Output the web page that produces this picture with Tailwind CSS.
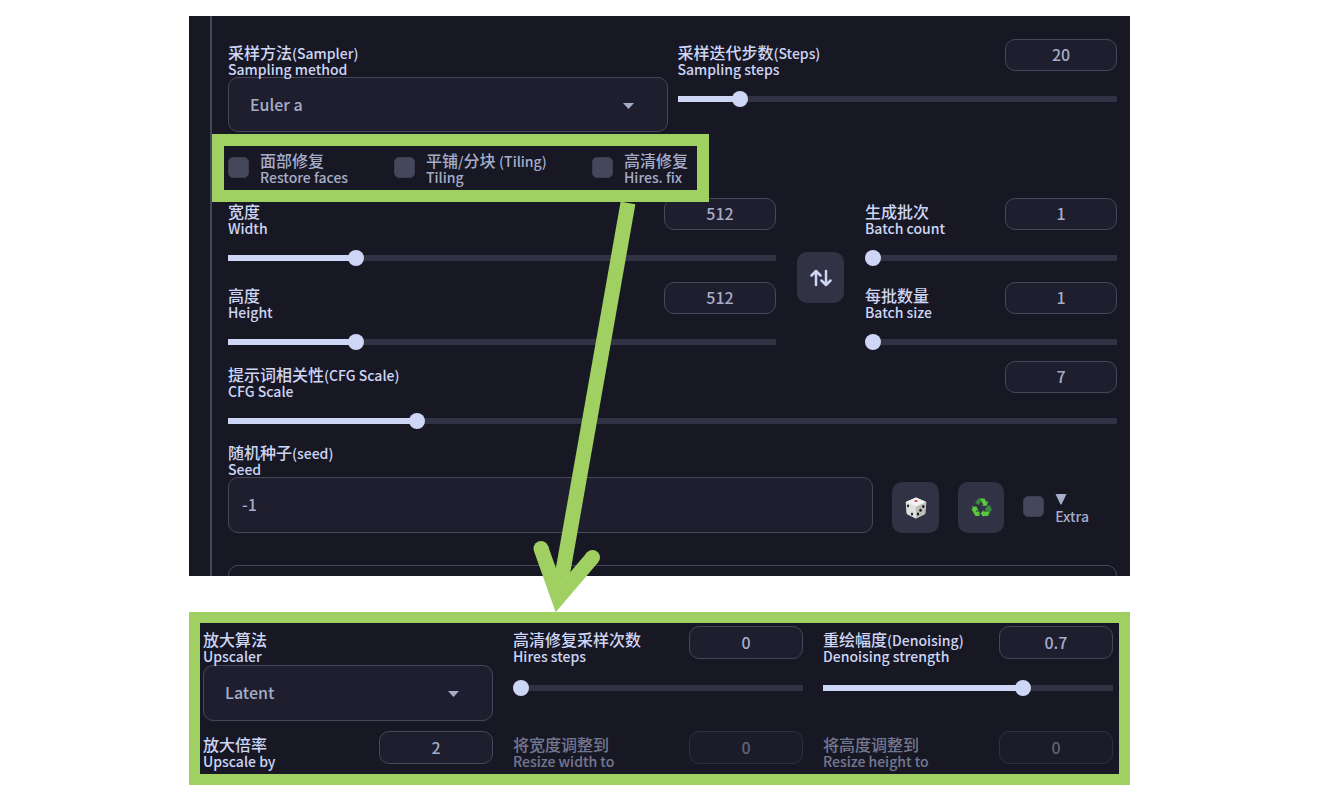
<!DOCTYPE html>
<html lang="zh-CN">
<head>
<meta charset="utf-8">
<title>Stable Diffusion Hires. fix</title>
<script src="https://cdn.jsdelivr.net/npm/@tailwindcss/browser@4"></script>
</head>
<body class="bg-white pt-4 pb-4 pl-[189px] pr-[198px] font-['Noto_Sans_CJK_SC',sans-serif] text-base/4 font-medium text-[#cdd6f4] [&_small]:text-sm/3 [&_input[type=range]]:block [&_input[type=range]]:h-[6px] [&_input[type=range]]:w-full [&_input[type=range]]:appearance-none [&_input[type=range]]:bg-[#313244] [&_input::-webkit-slider-thumb]:size-4 [&_input::-webkit-slider-thumb]:appearance-none [&_input::-webkit-slider-thumb]:rounded-full [&_input::-webkit-slider-thumb]:bg-[#cdd6f4] [&_input[type=text]]:rounded-[10px] [&_input[type=text]]:border [&_input[type=text]]:border-[#45475a] [&_input[type=text]]:bg-[#1e1e2e] [&_input[type=text]]:pb-[2px] [&_input[type=text]]:text-base [&_input[type=text]]:text-[#a6adc8] [&_input[type=checkbox]]:size-[21px] [&_input[type=checkbox]]:shrink-0 [&_input[type=checkbox]]:appearance-none [&_input[type=checkbox]]:rounded-[5px] [&_input[type=checkbox]]:border [&_input[type=checkbox]]:border-[#3c3d50] [&_input[type=checkbox]]:bg-[#45475a] [&_select]:w-full [&_select]:appearance-none [&_select]:rounded-[10px] [&_select]:border [&_select]:border-[#45475a] [&_select]:bg-[#1e1e2e] [&_select]:pb-[2px] [&_select]:pl-[21px] [&_select]:text-base [&_select]:text-[#a6adc8]">
<main class="relative">

  <section class="flex h-[560px] overflow-hidden bg-[#181825] pl-[21px]">
    <div class="min-w-0 flex-1 border-l-2 border-[#45475a] pt-[23px] pr-[13px] pl-4">

      <div class="grid grid-cols-2 gap-[10px]">
        <div class="pt-[5px]">
          <label for="sampler" class="relative z-10 block">采样方法<small>(Sampler)</small><br><small>Sampling method</small></label>
          <div class="relative mt-px">
            <select id="sampler" class="block h-[55px]"><option>Euler a</option></select>
            <svg class="pointer-events-none absolute top-[26px] right-[34px] h-[6px] w-[11px]" viewBox="0 0 11 6"><path d="M0 0h11L5.500 6z" fill="#a6adc8"/></svg>
          </div>
        </div>
        <div>
          <div class="flex justify-between">
            <label for="steps" class="pt-[5px]">采样迭代步数<small>(Steps)</small><br><small>Sampling steps</small></label>
            <input type="text" aria-label="Steps value" value="20" class="h-8 w-28 text-center">
          </div>
          <input id="steps" type="range" min="1" max="150" value="20" class="mt-5" style="background-image:linear-gradient(to right,#cdd6f4 14%,transparent 14%)">
        </div>
      </div>

      <div class="relative z-10 mt-[2px] -ml-4 flex h-[68px] w-[497px] border-[12px] border-[#a0d062] bg-[#181825] pt-[6px] pl-1 text-[#a6adc8]">
        <label class="flex w-[166px] gap-[11px]"><input type="checkbox" class="mt-[5px]"><span>面部修复<br><small>Restore faces</small></span></label>
        <label class="flex w-[198px] gap-[11px]"><input type="checkbox" class="mt-[5px]"><span>平铺<small>/</small>分块 <small>(Tiling)</small><br><small>Tiling</small></span></label>
        <label class="flex gap-[11px]"><input type="checkbox" class="mt-[5px]"><span>高清修复<br><small>Hires. fix</small></span></label>
      </div>

      <div class="-mt-1 flex items-center">
        <div class="min-w-0 flex-1 space-y-[21px]">
          <div>
            <div class="flex justify-between">
              <label for="width" class="pt-[5px]">宽度<br><small>Width</small></label>
              <input type="text" aria-label="Width value" value="512" class="h-8 w-28 text-center">
            </div>
            <input id="width" type="range" min="64" max="2048" value="512" class="mt-5" style="background-image:linear-gradient(to right,#cdd6f4 23%,transparent 23%)">
          </div>
          <div>
            <div class="flex justify-between">
              <label for="height" class="pt-[5px]">高度<br><small>Height</small></label>
              <input type="text" aria-label="Height value" value="512" class="h-8 w-28 text-center">
            </div>
            <input id="height" type="range" min="64" max="2048" value="512" class="mt-5" style="background-image:linear-gradient(to right,#cdd6f4 23%,transparent 23%)">
          </div>
        </div>
        <button aria-label="Swap width and height" class="mx-[21px] mt-3 flex h-[51px] w-[47px] items-center justify-center rounded-[10px] bg-[#313244]">
          <svg class="h-[18px] w-[22px]" viewBox="0 0 22 18" fill="none" stroke="#cdd6f4" stroke-width="2.500" stroke-linecap="round" stroke-linejoin="round"><path d="M6 16V2M1.500 6.500L6 2l4.500 4.500M16 2v14M11.500 11.500L16 16l4.500-4.500"/></svg>
        </button>
        <div class="w-[252px] space-y-[21px]">
          <div>
            <div class="flex justify-between">
              <label for="count" class="pt-[5px]">生成批次<br><small>Batch count</small></label>
              <input type="text" aria-label="Batch count value" value="1" class="h-8 w-28 text-center">
            </div>
            <input id="count" type="range" min="1" max="100" value="1" class="mt-5">
          </div>
          <div>
            <div class="flex justify-between">
              <label for="size" class="pt-[5px]">每批数量<br><small>Batch size</small></label>
              <input type="text" aria-label="Batch size value" value="1" class="h-8 w-28 text-center">
            </div>
            <input id="size" type="range" min="1" max="8" value="1" class="mt-5">
          </div>
        </div>
      </div>

      <div class="mt-4">
        <div class="flex justify-between">
          <label for="cfg" class="pt-[5px]">提示词相关性<small>(CFG Scale)</small><br><small>CFG Scale</small></label>
          <input type="text" aria-label="CFG value" value="7" class="h-8 w-28 text-center">
        </div>
        <input id="cfg" type="range" min="1" max="30" value="7" class="mt-5" style="background-image:linear-gradient(to right,#cdd6f4 21%,transparent 21%)">
      </div>

      <div class="mt-5 flex items-end">
        <div class="min-w-0 flex-1">
          <label for="seed" class="block">随机种子<small>(seed)</small><br><small>Seed</small></label>
          <input id="seed" type="text" value="-1" class="mt-px block h-14 w-full px-[13px]">
        </div>
        <button aria-label="Random seed" class="ml-[19px] flex h-[51px] w-[47px] items-center justify-center rounded-[10px] bg-[#313244]">
          <svg class="size-[22px]" viewBox="0 0 22 22">
            <path d="M11 .500L20.500 4.500Q21.500 5 21.300 6L20.300 16Q20.200 17 19.200 17.600L11 21.600L2.800 17.600Q1.800 17 1.700 16L.700 6Q.500 5 1.500 4.500Z" fill="#d6d6d6"/>
            <path d="M1 5L11 9.500V21.600L2.800 17.600Q1.800 17 1.700 16Z" fill="#dedede"/>
            <path d="M21 5L11 9.500V21.600L19.200 17.600Q20.200 17 20.300 16Z" fill="#bcbcb9"/>
            <path d="M11 .500L21 5L11 9.500L1 5Z" fill="#f1f1ef"/>
            <ellipse cx="11" cy="4" rx="1.700" ry="1.100" fill="#e03a4d"/>
            <g fill="#171717"><ellipse cx="3" cy="9" rx="1" ry="1.400"/><ellipse cx="7" cy="17" rx="1" ry="1.500"/><ellipse cx="18.300" cy="9.500" rx="1.200" ry="1.500"/><ellipse cx="15.500" cy="13.200" rx="1.200" ry="1.500"/><ellipse cx="13" cy="17" rx="1.200" ry="1.500"/></g>
          </svg>
        </button>
        <button aria-label="Reuse seed" class="ml-[19px] flex h-[51px] w-[46px] items-center justify-center rounded-[10px] bg-[#313244]">
          <svg class="h-[19px] w-[21px]" viewBox="0 0 21 19">
            <g fill="#5ac83c"><path d="M8 .500h5.500L15.500 4l2-1-2 5-5-.500 1.700-1L9.500 2z"/><path d="M0 8.500h5.500L7.500 13l-2-.800L3.500 16 .500 11.500 2 9.500z"/><path d="M19 13.500L17 18h-4.500v1L9.500 15.500l3-3.500v1.500z"/></g>
            <g fill="#378b3f"><path d="M7.300.800L10.300 2 8 7 4 4.800z"/><path d="M16 8.300L18.500 7 21 11.500 19 14h-3.500l-1.500-2.500z"/></g>
            <path d="M3.500 13.500h5V18H4.500L2.500 15z" fill="#5ac83c"/>
          </svg>
        </button>
        <label class="mr-7 ml-[19px] flex h-[51px] items-start gap-[11px] pt-[10px] text-[#a6adc8]">
          <input type="checkbox" class="mt-1">
          <span class="block"><svg class="mt-[2px] mb-[2px] block h-[11px] w-3" viewBox="0 0 12 11" role="img" aria-label="Show"><path d="M.500 0h11L6.500 10.500h-1z" fill="#a6adc8"/></svg><small>Extra</small></span>
        </label>
      </div>

      <div class="mt-8 h-16 rounded-[10px] border border-[#45475a]"></div>
    </div>
  </section>

  <section class="mt-9 grid grid-cols-3 gap-x-5 gap-y-[10px] border-[11px] border-[#a0d062] bg-[#181825] pt-[3px] pr-[6px] pb-[11px] pl-[3px]">
    <div class="pt-[5px]">
      <label for="upscaler" class="relative z-10 block">放大算法<br><small>Upscaler</small></label>
      <div class="relative mt-[2px]">
        <select id="upscaler" class="block h-14"><option>Latent</option></select>
        <svg class="pointer-events-none absolute top-[26px] right-[34px] h-[6px] w-[11px]" viewBox="0 0 11 6"><path d="M0 0h11L5.500 6z" fill="#a6adc8"/></svg>
      </div>
    </div>
    <div>
      <div class="flex justify-between">
        <label for="hires" class="pt-[5px]">高清修复采样次数<br><small>Hires steps</small></label>
        <input type="text" aria-label="Hires steps value" value="0" class="h-[33px] w-[114px] text-center">
      </div>
      <input id="hires" type="range" min="0" max="150" value="0" class="mt-[22px]">
    </div>
    <div>
      <div class="flex justify-between">
        <label for="denoise" class="pt-[5px]">重绘幅度<small>(Denoising)</small><br><small>Denoising strength</small></label>
        <input type="text" aria-label="Denoising value" value="0.7" class="h-[33px] w-[114px] text-center">
      </div>
      <input id="denoise" type="range" min="0" max="1" step="0.01" value="0.7" class="mt-[22px]" style="background-image:linear-gradient(to right,#cdd6f4 69%,transparent 69%)">
    </div>
    <div class="flex h-8 justify-between">
      <label for="upby" class="pt-[5px]">放大倍率<br><small>Upscale by</small></label>
      <input id="upby" type="text" value="2" class="h-[33px] w-[114px] text-center">
    </div>
    <div class="flex h-8 justify-between opacity-50">
      <label for="rw" class="pt-[5px]">将宽度调整到<br><small>Resize width to</small></label>
      <input id="rw" type="text" value="0" disabled class="h-[33px] w-[114px] text-center">
    </div>
    <div class="flex h-8 justify-between opacity-50">
      <label for="rh" class="pt-[5px]">将高度调整到<br><small>Resize height to</small></label>
      <input id="rh" type="text" value="0" disabled class="h-[33px] w-[114px] text-center">
    </div>
  </section>

  <svg class="pointer-events-none absolute top-[186px] left-[341px] z-20 h-[410px] w-[110px]" viewBox="0 0 110 410" fill="none" stroke="#a0d062" stroke-width="15" aria-hidden="true">
    <path d="M98 1L31 380"/>
    <path d="M11 346.500L28.400 395.500L62.500 355.500" stroke-linejoin="miter"/>
    <g fill="#a0d062" stroke="none"><circle cx="11" cy="346.500" r="7.500"/><circle cx="62.500" cy="355.500" r="7.500"/></g>
  </svg>
</main>
</body>
</html>
